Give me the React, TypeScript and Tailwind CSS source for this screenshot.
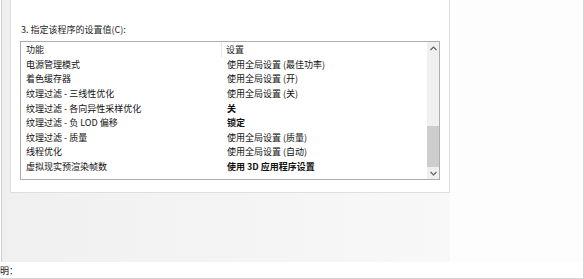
const FONT = '"Noto Sans CJK SC", "Microsoft YaHei", sans-serif'

type Row = { name: string; value: string; bold?: boolean }

const ROWS: Row[] = [
  { name: '电源管理模式', value: '使用全局设置 (最佳功率)' },
  { name: '着色缓存器', value: '使用全局设置 (开)' },
  { name: '纹理过滤 - 三线性优化', value: '使用全局设置 (关)' },
  { name: '纹理过滤 - 各向异性采样优化', value: '关', bold: true },
  { name: '纹理过滤 - 负 LOD 偏移', value: '锁定', bold: true },
  { name: '纹理过滤 - 质量', value: '使用全局设置 (质量)' },
  { name: '线程优化', value: '使用全局设置 (自动)' },
  { name: '虚拟现实预渲染帧数', value: '使用 3D 应用程序设置', bold: true },
]

function Chevron({ up }: { up?: boolean }) {
  return (
    <svg width="7" height="5" viewBox="0 0 7 5" className="block">
      <path
        d={up ? 'M0.5 4 L3.5 1 L6.5 4' : 'M0.5 1 L3.5 4 L6.5 1'}
        fill="none"
        stroke="#606060"
        strokeWidth="1.2"
      />
    </svg>
  )
}

function SettingsList() {
  return (
    <div className="flex h-[139px] w-[420px] border border-[#abadb3] bg-white">
      <div className="flex min-w-0 flex-1 flex-col">
        <div className="flex h-[15px] items-center text-[9px] leading-none text-[#1e1e1e]">
          <div className="flex h-full w-[201px] items-center border-r border-[#e5e5e5] pl-[5px]">
            功能
          </div>
          <div className="pl-[4px]">设置</div>
        </div>
        {ROWS.map((r) => (
          <div
            key={r.name}
            className="flex h-[14.6px] items-center text-[9px] leading-none text-[#111]"
          >
            <div className="w-[201px] pl-[5px]">{r.name}</div>
            <div className={`pl-[5px] ${r.bold ? 'font-bold' : ''}`}>{r.value}</div>
          </div>
        ))}
      </div>

      {/* scrollbar */}
      <div className="flex w-[12px] flex-col bg-[#f0f0f0]">
        <div className="flex h-[13px] items-center justify-center">
          <Chevron up />
        </div>
        <div className="flex flex-1 flex-col">
          <div className="h-[71px]" />
          <div className="h-[41px] bg-[#cdcdcd]" />
        </div>
        <div className="flex h-[12px] items-center justify-center">
          <Chevron />
        </div>
      </div>
    </div>
  )
}

export default function App() {
  return (
    <div
      className="flex h-[279px] w-[584px] flex-col overflow-hidden border-r border-b border-[#d4d4d4] bg-white"
      style={{ fontFamily: FONT }}
    >
      <div className="flex h-[262px]">
        <div className="ml-[1px] w-[449px] border-l border-[#cfcfcf] bg-linear-to-r from-[#f0f0f0] to-[#f8f8f8]">
          <div className="ml-[8px] flex h-[193px] w-[440px] flex-col border-x border-b border-[#dedede] bg-white pt-[24px] pl-[9px]">
            <div className="h-[12px] pl-[1px] text-[9px] leading-[12px] text-[#1e1e1e]">
              3. 指定该程序的设置值(C):
            </div>
            <div className="mt-[5px]">
              <SettingsList />
            </div>
          </div>
        </div>
        <div className="flex-1 bg-[#fdfdfd]" />
      </div>
      <div className="flex h-[16px] items-center">
        <span className="ml-[-9px] text-[9px] leading-none text-[#111]">说明：</span>
      </div>
    </div>
  )
}
